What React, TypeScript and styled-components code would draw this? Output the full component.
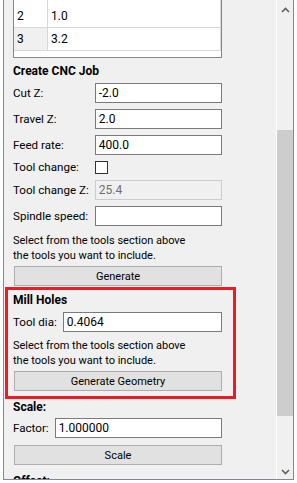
import React from "react";
import styled, { createGlobalStyle } from "styled-components";

const Global = createGlobalStyle`
  html, body { margin: 0; padding: 0; background: #ffffff; }
  body { font-family: Roboto, "Liberation Sans", sans-serif; font-size: 11px; color: #000; }
  * { box-sizing: border-box; }
`;

const Page = styled.div`
  width: 297px;
  height: 483px;
  padding: 0 3px 3px 3px;
  overflow: hidden;
`;

const Frame = styled.div`
  display: flex;
  height: 480px;
  border: 1px solid #828790;
  border-top: none;
  background: #f0f0f0;
  overflow: hidden;
`;

const Content = styled.div`
  flex: 1;
  overflow: hidden;
  padding: 0 54px 0 9px;
  display: flex;
  flex-direction: column;
  & > * { flex-shrink: 0; }
`;

const Scrollbar = styled.div`
  width: 17px;
  border-left: 1px solid #ffffff;
  background: #f0f0f0;
  display: flex;
  flex-direction: column;
  align-items: stretch;
`;

const Arrow = styled.div`
  height: 17px;
  display: flex;
  align-items: center;
  justify-content: center;
  padding-top: 2px;
`;

const Track = styled.div`
  flex: 1;
  display: flex;
  flex-direction: column;
`;

const Thumb = styled.div<{ $top: number; $h: number }>`
  margin-top: ${(p) => p.$top}px;
  height: ${(p) => p.$h}px;
  background: #cdcdcd;
`;

const Table = styled.div`
  border: 1px solid #828790;
  border-top: none;
  background: #ffffff;
  height: 58px;
  display: flex;
  flex-direction: column;
  font-size: 12px;
`;

const TRow = styled.div<{ $h: number }>`
  display: grid;
  grid-template-columns: 34px 1fr;
  height: ${(p) => p.$h}px;
  border-bottom: 1px solid #d8d8d8;
`;

const THead = styled.div<{ $gray?: boolean }>`
  background: ${(p) => (p.$gray ? "#f0f0f0" : "#ffffff")};
  border-right: 1px solid #d8d8d8;
  display: flex;
  align-items: flex-end;
  padding: 0 0 4px 3px;
`;

const TCell = styled.div`
  display: flex;
  align-items: flex-end;
  padding: 0 0 4px 3px;
  border-right: 1px solid #d8d8d8;
`;

const Title = styled.div<{ $mt: number }>`
  font-weight: bold;
  font-size: 12px;
  margin-top: ${(p) => p.$mt}px;
  height: 16px;
  line-height: 16px;
`;

const Form = styled.div<{ $mt: number }>`
  display: grid;
  grid-template-columns: auto 1fr;
  column-gap: 6px;
  row-gap: 6px;
  align-items: center;
  margin-top: ${(p) => p.$mt}px;
`;

const Label = styled.div`
  white-space: nowrap;
  line-height: 13px;
  font-size: 11.6px;
`;

const Input = styled.div<{ $disabled?: boolean }>`
  height: 20px;
  border: 1px solid ${(p) => (p.$disabled ? "#cccccc" : "#7a7a7a")};
  background: ${(p) => (p.$disabled ? "#f0f0f0" : "#ffffff")};
  color: ${(p) => (p.$disabled ? "#6d6d6d" : "#000")};
  padding: 0 3px;
  line-height: 18px;
  font-size: 12px;
`;

const Check = styled.div`
  width: 13px;
  height: 13px;
  border: 1px solid #333333;
  background: #ffffff;
`;

const Note = styled.div<{ $mt: number }>`
  margin-top: ${(p) => p.$mt}px;
  line-height: 15px;
`;

const Button = styled.div<{ $mt: number }>`
  margin: ${(p) => p.$mt}px 0 0 1px;
  height: 20px;
  border: 1px solid #adadad;
  background: #e1e1e1;
  display: flex;
  align-items: center;
  justify-content: center;
`;

const Highlight = styled.div`
  margin: 1px -14px 0 -8px;
  border: 3px solid #ed1c24;
  padding: 2px 11px 5px 5px;
  display: flex;
  flex-direction: column;
`;

const Chevron = ({ up }: { up?: boolean }) => (
  <svg width="9" height="6" viewBox="0 0 9 6">
    <path
      d={up ? "M1 5 L4.5 1.5 L8 5" : "M1 1 L4.5 4.5 L8 1"}
      fill="none"
      stroke="#606060"
      strokeWidth="1.6"
    />
  </svg>
);

export default function App() {
  return (
    <Page>
      <Global />
      <Frame>
        <Content>
          <Table>
            <TRow $h={28}>
              <THead>2</THead>
              <TCell>1.0</TCell>
            </TRow>
            <TRow $h={23}>
              <THead $gray>3</THead>
              <TCell>3.2</TCell>
            </TRow>
          </Table>
          <Title $mt={5}>Create CNC Job</Title>
          <Form $mt={4}>
            <Label>Cut Z:</Label>
            <Input>-2.0</Input>
            <Label>Travel Z:</Label>
            <Input>2.0</Input>
            <Label>Feed rate:</Label>
            <Input>400.0</Input>
            <Label>Tool change:</Label>
            <Check />
            <Label>Tool change Z:</Label>
            <Input $disabled>25.4</Input>
            <Label>Spindle speed:</Label>
            <Input />
          </Form>
          <Note $mt={7}>
            Select from the tools section above
            <br />
            the tools you want to include.
          </Note>
          <Button $mt={3}>Generate</Button>
          <Highlight>
            <Title $mt={0}>Mill Holes</Title>
            <Form $mt={4}>
              <Label>Tool dia:</Label>
              <Input>0.4064</Input>
            </Form>
            <Note $mt={6}>
              Select from the tools section above
              <br />
              the tools you want to include.
            </Note>
            <Button $mt={3}>Generate Geometry</Button>
          </Highlight>
          <Title $mt={0}>Scale:</Title>
          <Form $mt={3}>
            <Label>Factor:</Label>
            <Input>1.000000</Input>
          </Form>
          <Button $mt={7}>Scale</Button>
          <Title $mt={8}>Offset:</Title>
        </Content>
        <Scrollbar>
          <Arrow>
            <Chevron up />
          </Arrow>
          <Track>
            <Thumb $top={113} $h={286} />
          </Track>
          <Arrow>
            <Chevron />
          </Arrow>
        </Scrollbar>
      </Frame>
    </Page>
  );
}
